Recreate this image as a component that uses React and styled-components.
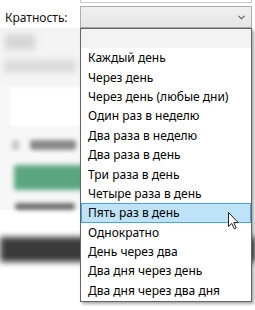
import styled, { createGlobalStyle } from "styled-components";

const options = [
    "Каждый день",
    "Через день",
    "Через день (любые дни)",
    "Один раз в неделю",
    "Два раза в неделю",
    "Два раза в день",
    "Три раза в день",
    "Четыре раза в день",
    "Пять раз в день",
    "Однократно",
    "День через два",
    "Два дня через день",
    "Два дня через два дня",
];

export default function App() {
    return (
        <Page>
            <GlobalStyle />
            <TopStrip>
                <TopField />
            </TopStrip>
            <FieldRow>
                <Label>Кратность:</Label>
                <Combo>
                    <svg width="7" height="5" viewBox="0 0 7 5">
                        <path d="M0.5 0.8 L3.5 3.8 L6.5 0.8" fill="none" stroke="#555" strokeWidth="1.1" />
                    </svg>
                </Combo>
            </FieldRow>

            {/* dimmed dialog content behind the open list */}
            <Backdrop>
                <Hint />
                <HintWide />
                <WhiteField />
                <CheckRow>
                    <CheckMark />
                    <CheckText />
                </CheckRow>
                <GreenButton />
                <LinkLine />
            </Backdrop>
            <DarkBand />

            <Dropdown>
                <SearchRow />
                {options.map((o, i) => (
                    <Option key={o} $selected={i === 8}>{o}</Option>
                ))}
            </Dropdown>

            <Cursor width="11" height="18" viewBox="0 0 11 18">
                <path d="M0.5 0.5 L0.5 14.5 L3.8 11.4 L6.2 16.8 L8.2 15.9 L5.8 10.6 L10.2 10.6 Z" fill="#fff" stroke="#222" strokeWidth="1" strokeLinejoin="round" />
            </Cursor>
        </Page>
    );
}

const GlobalStyle = createGlobalStyle`
body{
    margin: 0;
    background: #ffffff;
    font-family: "Noto Sans", "Segoe UI", sans-serif;
}
`

const Page = styled.div`
position: relative;
width: 255px;
height: 310px;
overflow: hidden;
background: #ffffff;
`

const TopStrip = styled.div`
height: 3px;
padding-left: 80px;
padding-right: 3px;
display: flex;
`

const TopField = styled.div`
flex: 1;
border: 1px solid #c9c7dc;
border-top: none;
background: #ffffff;
`

const FieldRow = styled.div`
display: flex;
align-items: center;
height: 22px;
margin-top: 3px;
padding-left: 5px;
padding-right: 3px;
`

const Label = styled.div`
width: 75px;
font-size: 12px;
color: #111;
`

const Combo = styled.div`
box-sizing: border-box;
flex: 1;
height: 22px;
border: 1px solid #acacac;
background: linear-gradient(#f0f0f0, #e5e5e5);
display: flex;
justify-content: flex-end;
align-items: center;
padding-right: 6px;
svg{
    display: block;
}
`

const Backdrop = styled.div`
width: 80px;
height: 182px;
box-sizing: border-box;
padding: 6px 0px 0px 5px;
background: linear-gradient(#f4f4f4 0px, #f4f4f4 55px, #f7f7f7 60px);
display: flex;
flex-direction: column;
`

const Hint = styled.div`
width: 30px;
height: 16px;
background: #d6d6d6;
filter: blur(3px);
`

const HintWide = styled(Hint)`
width: 72px;
height: 12px;
margin-top: 10px;
margin-left: -1px;
background: #dadada;
`

const WhiteField = styled.div`
width: 90px;
height: 38px;
margin: 16px 0px 0px 5px;
background: #ffffff;
filter: blur(1.5px);
`

const CheckRow = styled.div`
display: flex;
gap: 11px;
height: 10px;
margin: 14px 0px 0px 7px;
`

const CheckMark = styled.div`
width: 7px;
background: #c4c4c4;
border-radius: 3px;
filter: blur(2px);
`

const CheckText = styled(CheckMark)`
width: 46px;
background: #8a8a8a;
`

const GreenButton = styled.div`
width: 90px;
height: 25px;
margin: 15px 0px 0px 9px;
background: #5ba680;
border-radius: 2px;
filter: blur(2.5px);
`

const LinkLine = styled.div`
width: 60px;
height: 7px;
margin: 13px 0px 0px 10px;
background: #707070;
border-radius: 3px;
filter: blur(2px);
`

const DarkBand = styled.div`
height: 25px;
margin-top: 27px;
background: #3a3a3a;
filter: blur(3px);
`

const Dropdown = styled.div`
position: absolute;
left: 80px;
top: 28px;
width: 172px;
height: 274px;
box-sizing: border-box;
border: 1px solid #646464;
background: #ffffff;
box-shadow: 2px 2px 3px rgba(0, 0, 0, 0.35);
display: flex;
flex-direction: column;
`

const SearchRow = styled.div`
height: 19px;
background: #f3f3f3;
flex-shrink: 0;
`

const Option = styled.div`
box-sizing: border-box;
height: 19.4px;
flex-shrink: 0;
padding-left: 6px;
display: flex;
align-items: center;
font-size: 12px;
color: #000;
white-space: nowrap;
background: ${p => p.$selected ? "#bee3f8" : "transparent"};
border: 1px solid ${p => p.$selected ? "#4aa3e2" : "transparent"};
`

const Cursor = styled.svg`
position: absolute;
left: 228px;
top: 212px;
`
